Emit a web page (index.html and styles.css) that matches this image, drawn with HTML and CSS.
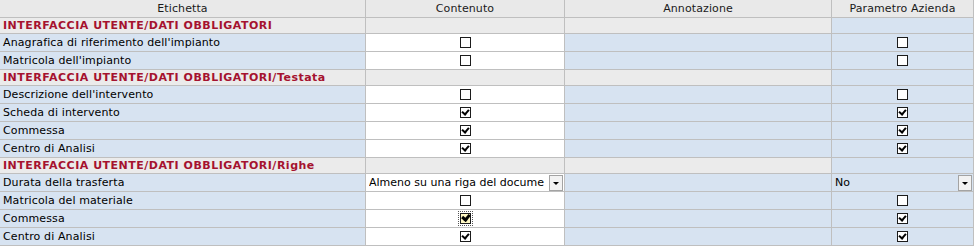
FILE: index.html
```html
<!DOCTYPE html>
<html lang="it">
<head>
    <meta charset="UTF-8">
    <title>Parametri interfaccia</title>
    <link rel="stylesheet" href="styles.css">
</head>
<body>
    <div class="grid">
      <div class="head">Etichetta</div>
      <div class="head">Contenuto</div>
      <div class="head">Annotazione</div>
      <div class="head">Parametro Azienda</div>

      <div class="sec label">INTERFACCIA UTENTE/DATI OBBLIGATORI</div>
      <div class="sec"></div>
      <div class="sec"></div>
      <div class="sec blue"></div>

      <div class="row label">Anagrafica di riferimento dell'impianto</div>
      <div class="row white"><span class="chk"></span></div>
      <div class="row"></div>
      <div class="row"><span class="chk"></span></div>

      <div class="row label">Matricola dell'impianto</div>
      <div class="row white"><span class="chk"></span></div>
      <div class="row"></div>
      <div class="row"><span class="chk"></span></div>

      <div class="sec label">INTERFACCIA UTENTE/DATI OBBLIGATORI/Testata</div>
      <div class="sec"></div>
      <div class="sec"></div>
      <div class="sec blue"></div>

      <div class="row label">Descrizione dell'intervento</div>
      <div class="row white"><span class="chk"></span></div>
      <div class="row"></div>
      <div class="row"><span class="chk"></span></div>

      <div class="row label">Scheda di intervento</div>
      <div class="row white"><span class="chk on"></span></div>
      <div class="row"></div>
      <div class="row"><span class="chk on"></span></div>

      <div class="row label">Commessa</div>
      <div class="row white"><span class="chk on"></span></div>
      <div class="row"></div>
      <div class="row"><span class="chk on"></span></div>

      <div class="row label">Centro di Analisi</div>
      <div class="row white"><span class="chk on"></span></div>
      <div class="row"></div>
      <div class="row"><span class="chk on"></span></div>

      <div class="sec label">INTERFACCIA UTENTE/DATI OBBLIGATORI/Righe</div>
      <div class="sec"></div>
      <div class="sec"></div>
      <div class="sec blue"></div>

      <div class="row label">Durata della trasferta</div>
      <div class="row white">
        <div class="combo"><span class="combo-text">Almeno su una riga del docume</span><span class="combo-btn"></span></div>
      </div>
      <div class="row"></div>
      <div class="row">
        <div class="combo"><span class="combo-text">No</span><span class="combo-btn"></span></div>
      </div>

      <div class="row label">Matricola del materiale</div>
      <div class="row white"><span class="chk"></span></div>
      <div class="row"></div>
      <div class="row"><span class="chk"></span></div>

      <div class="row label">Commessa</div>
      <div class="row white"><span class="chk on focus"></span></div>
      <div class="row"></div>
      <div class="row"><span class="chk on"></span></div>

      <div class="row label">Centro di Analisi</div>
      <div class="row white"><span class="chk on"></span></div>
      <div class="row"></div>
      <div class="row"><span class="chk on"></span></div>
    </div>
</body>
</html>
```

FILE: styles.css
```css
* {
    margin: 0;
    padding: 0;
    box-sizing: border-box;
}

body {
    background-color: #fff;
    font-family: "DejaVu Sans", Verdana, sans-serif;
    font-size: 11px;
    color: #000;
}

.grid {
    display: grid;
    grid-template-columns: 365px 198px 266px 141px;
    gap: 1px;
    padding: 0 1px 1px 0;
    width: 974px;
    background-color: #bfbfbf;
}

.head,
.sec,
.row {
    display: flex;
    align-items: center;
    justify-content: center;
    white-space: nowrap;
    overflow: hidden;
}

.head {
    height: 17px;
    background-color: #e9e9e9;
    color: #1a1a1a;
    letter-spacing: 0.1px;
}

.sec {
    height: 15px;
    background-color: #ebebeb;
}

.sec.label {
    justify-content: flex-start;
    padding-left: 3px;
    color: #a5122f;
    font-weight: bold;
    letter-spacing: 0.5px;
}

.sec.blue,
.row {
    background-color: #d7e3f1;
}

.row {
    height: 17px;
}

.row.label {
    justify-content: flex-start;
    padding-left: 3px;
    letter-spacing: 0.12px;
}

.row.white {
    background-color: #fff;
}

/* checkbox */
.chk {
    display: block;
    width: 11px;
    height: 11px;
    border: 1px solid #1c1c1c;
    background-color: #fff;
    position: relative;
}

.chk.on::after {
    content: "";
    position: absolute;
    left: 2px;
    top: 0px;
    width: 3px;
    height: 5px;
    border-right: 2px solid #000;
    border-bottom: 2px solid #000;
    transform: rotate(40deg);
}

.chk.focus {
    background-color: #fff8c4;
    outline: 1px dotted #555;
    outline-offset: 1px;
}

.chk.focus::after {
    border-width: 0 3px 3px 0;
    left: 2px;
    top: -1px;
}

/* combo */
.combo {
    display: flex;
    align-items: center;
    width: 100%;
    height: 17px;
    padding-left: 3px;
}

.combo-text {
    flex: 1;
    overflow: hidden;
    white-space: nowrap;
}

.combo-btn {
    width: 14px;
    height: 16px;
    margin-right: 1px;
    border: 1px solid #a3a3a3;
    background-color: #f2f2f2;
    position: relative;
}

.combo-btn::after {
    content: "";
    position: absolute;
    left: 3px;
    top: 6px;
    border-left: 3px solid transparent;
    border-right: 3px solid transparent;
    border-top: 3px solid #000;
}
```
